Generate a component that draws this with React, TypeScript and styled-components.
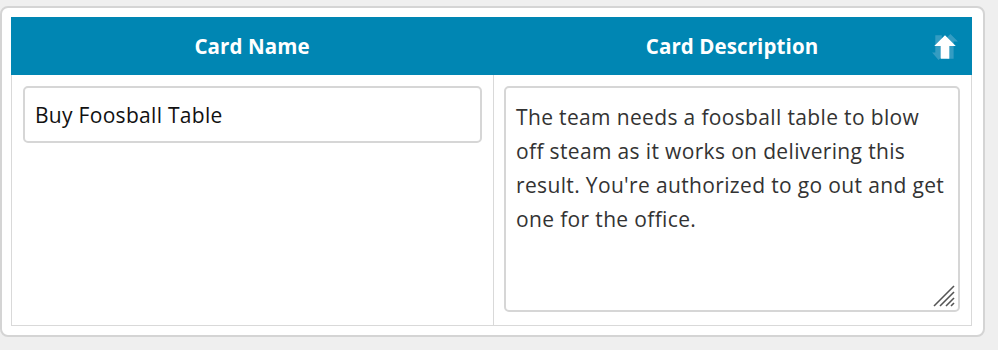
import { FC } from "react";
import styled, { createGlobalStyle } from "styled-components";

const GlobalStyle = createGlobalStyle`
  html, body {
    margin: 0;
    padding: 0;
    background: #efefef;
    font-family: "Open Sans", "Liberation Sans", sans-serif;
  }
  * {
    box-sizing: border-box;
  }
`;

const Page = styled.div`
  width: 998px;
  height: 350px;
  padding: 6px 13px 0 0;
  background: #efefef;
`;

const Card = styled.div`
  width: 985px;
  height: 331px;
  background: #fff;
  border: 2px solid #d4d4d4;
  border-radius: 8px;
  padding: 9px 11px 9px 9px;
`;

const Table = styled.div`
  display: grid;
  grid-template-columns: 481px 1fr;
  grid-template-rows: 58px 1fr;
  height: 100%;
  border: 1px solid #d9d9d9;
  border-top: none;
`;

const HeadCell = styled.div<{ $last?: boolean }>`
  position: relative;
  display: flex;
  align-items: center;
  justify-content: center;
  background: #0086b3;
  color: #fff;
  font-weight: 700;
  font-size: 20.5px;
  letter-spacing: 0.1px;
  padding-bottom: 1px;
  margin: 0 ${(p) => (p.$last ? "-1px" : "0")} 0 -1px;
`;

const SortIcon = styled.svg`
  position: absolute;
  right: 14px;
  top: 16px;
`;

const BodyCell = styled.div<{ $last?: boolean }>`
  padding: 11px 11px 13px ${(p) => (p.$last ? "10px" : "11px")};
  border-left: ${(p) => (p.$last ? "1px solid #d9d9d9" : "none")};
`;

const NameInput = styled.div`
  height: 57px;
  border: 2px solid #d6d6d6;
  border-radius: 5px;
  padding: 0 10px;
  display: flex;
  align-items: center;
  font-size: 21px;
  letter-spacing: 0.3px;
  color: #111;
`;

const DescBox = styled.div`
  position: relative;
  height: 100%;
  border: 2px solid #d6d6d6;
  border-radius: 5px;
  padding: 12px 10px;
  font-size: 21px;
  letter-spacing: 0.35px;
  line-height: 34px;
  color: #333;
`;

const Grip = styled.svg`
  position: absolute;
  right: 2px;
  bottom: 2px;
`;

const App: FC = () => {
  return (
    <>
      <GlobalStyle />
      <Page>
        <Card>
          <Table>
            <HeadCell>Card Name</HeadCell>
            <HeadCell $last>
              Card Description
              <SortIcon width="26" height="28" viewBox="0 0 24 26">
                <path d="M17 1 L24 8 L20 8 L20 24 L14 24 L14 8 L10 8 Z" fill="#4aa5c9" opacity="0.7" />
                <path d="M6 25 L0 18 L3 18 L3 2 L9 2 L9 18 L13 18 Z" fill="#4aa5c9" opacity="0.7" />
                <path d="M12 2 L22 12 L16 12 L16 24 L8 24 L8 12 L2 12 Z" fill="#fff" />
              </SortIcon>
            </HeadCell>
            <BodyCell>
              <NameInput>Buy Foosball Table</NameInput>
            </BodyCell>
            <BodyCell $last>
              <DescBox>
                The team needs a foosball table to blow off steam as it works on delivering this
                result. You're authorized to go out and get one for the office.
                <Grip width="24" height="24" viewBox="0 0 24 24">
                  <g stroke="#555" strokeWidth="1.6">
                    <line x1="2" y1="22" x2="22" y2="2" />
                    <line x1="8" y1="22" x2="22" y2="8" />
                    <line x1="14" y1="22" x2="22" y2="14" />
                    <line x1="19" y1="22" x2="22" y2="19" />
                  </g>
                </Grip>
              </DescBox>
            </BodyCell>
          </Table>
        </Card>
      </Page>
    </>
  );
};

export default App;
